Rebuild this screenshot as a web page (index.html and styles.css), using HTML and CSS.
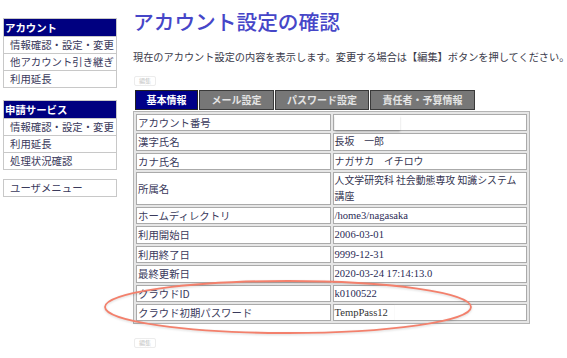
FILE: index.html
```html
<!DOCTYPE html>
<html lang="ja">
<head>
<meta charset="utf-8">
<link rel="stylesheet" href="styles.css">
</head>
<body>
<div class="page">
  <nav class="side">
    <div class="group">
      <div class="ghead">アカウント</div>
      <div class="gitem">情報確認・設定・変更</div>
      <div class="gitem">他アカウント引き継ぎ</div>
      <div class="gitem">利用延長</div>
    </div>
    <div class="group">
      <div class="ghead">申請サービス</div>
      <div class="gitem">情報確認・設定・変更</div>
      <div class="gitem">利用延長</div>
      <div class="gitem">処理状況確認</div>
    </div>
    <div class="group single">
      <div class="gitem first">ユーザメニュー</div>
    </div>
  </nav>
  <main class="main">
    <h1 class="title">アカウント設定の確認</h1>
    <p class="desc">現在のアカウント設定の内容を表示します。変更する場合は【編集】ボタンを押してください。</p>
    <div class="editbtn">編集</div>
    <div class="tabs">
      <div class="tab active t1">基本情報</div>
      <div class="tab t2">メール設定</div>
      <div class="tab t3">パスワード設定</div>
      <div class="tab t4">責任者・予算情報</div>
    </div>
    <table class="info">
      <tr><td class="lbl">アカウント番号</td><td class="val"><span class="mask"></span></td></tr>
      <tr><td class="lbl">漢字氏名</td><td class="val jp">長坂　一郎</td></tr>
      <tr><td class="lbl">カナ氏名</td><td class="val jp">ナガサカ　イチロウ</td></tr>
      <tr><td class="lbl">所属名</td><td class="val jp">人文学研究科 社会動態専攻 知識システム講座</td></tr>
      <tr><td class="lbl">ホームディレクトリ</td><td class="val">/home3/nagasaka</td></tr>
      <tr><td class="lbl">利用開始日</td><td class="val">2006-03-01</td></tr>
      <tr><td class="lbl">利用終了日</td><td class="val">9999-12-31</td></tr>
      <tr><td class="lbl">最終更新日</td><td class="val">2020-03-24 17:14:13.0</td></tr>
      <tr><td class="lbl">クラウドID</td><td class="val">k0100522</td></tr>
      <tr><td class="lbl">クラウド初期パスワード</td><td class="val"><span class="pass">TempPass12</span></td></tr>
    </table>
    <div class="editbtn bottom">編集</div>
  </main>
  <svg class="oval" width="400" height="70" viewBox="0 0 400 70">
    <ellipse cx="186" cy="33" rx="183" ry="26" fill="none" stroke="#f3806c" stroke-width="1.8"/>
  </svg>
</div>
</body>
</html>
```
FILE: styles.css
```css
* { box-sizing: border-box; }
html, body { margin: 0; padding: 0; background: #fff; }
body {
  font-family: "Noto Sans CJK JP", "Noto Sans", sans-serif;
  font-size: 10.4px;
  color: #333;
}
.page {
  position: relative;
  display: flex;
  align-items: flex-start;
  width: 567px;
  height: 358px;
  overflow: hidden;
}
.side {
  width: 114px;
  margin: 18px 0 0 3px;
  flex: none;
  display: flex;
  flex-direction: column;
  gap: 12px;
}
.group {
  border: 1px solid #c8c8c8;
}
.group.single { margin-top: -3px; }
.ghead {
  height: 17px;
  line-height: 17px;
  background: #000080;
  color: #fff;
  font-weight: bold;
  padding-left: 1px;
  white-space: nowrap;
}
.gitem {
  height: 17px;
  line-height: 16px;
  border-top: 1px solid #c8c8c8;
  padding-left: 6px;
  color: #3a3a5c;
  white-space: nowrap;
  overflow: hidden;
}
.gitem.first { border-top: none; height: 16px; }
.main {
  margin-left: 16px;
  flex: none;
  width: 440px;
}
.title {
  margin: 8px 0 0 0;
  font-size: 20.7px;
  line-height: 26px;
  font-weight: 500;
  color: #4646c8;
  white-space: nowrap;
}
.desc {
  margin: 16px 0 0 0;
  font-size: 10.2px;
  line-height: 14px;
  color: #3a3a4a;
  white-space: nowrap;
}
.editbtn {
  margin: 12px 0 0 1px;
  width: 22px;
  height: 10px;
  border: 1px solid #ececec;
  border-radius: 2px;
  font-size: 6px;
  line-height: 8px;
  text-align: center;
  color: #c4c4c4;
}
.editbtn.bottom { margin-top: 14px; }
.tabs {
  display: flex;
  margin: 4px 0 0 2px;
  gap: 1px;
}
.tab {
  height: 20px;
  line-height: 18px;
  padding: 0;
  text-align: center;
  border: 1px solid #3a3a3a;
  background: #777;
  color: #e4e4e4;
  font-weight: bold;
  font-size: 10px;
  white-space: nowrap;
}
.t1 { width: 63px; }
.t2 { width: 75px; }
.t3 { width: 94px; }
.t4 { width: 105px; }
.tab.active {
  background: #000088;
  color: #fff;
  border-color: #222;
}
.info {
  margin-top: 1px;
  width: 397px;
  border-collapse: separate;
  border-spacing: 2px;
  border: 1px solid #b4b4b4;
  background: #e6e6e6;
  table-layout: fixed;
}
.info td {
  border: 1px solid #aaa;
  background: #fff;
  padding: 0 1px;
  line-height: 15.4px;
  vertical-align: middle;
}
.lbl { color: #3a3a5c; white-space: nowrap; }
.val {
  font-family: "Liberation Serif", "Noto Sans CJK JP", serif;
  color: #2a2a55;
  font-size: 10.6px;
}
.val.jp {
  font-family: "Noto Sans CJK JP", sans-serif;
  font-size: 9.9px;
  color: #33334f;
}
.mask {
  display: block;
  width: 65px;
  height: 15px;
  background: #fff;
  box-shadow: 0 2px 2px rgba(0,0,0,0.18);
}
.pass {
  display: inline-block;
  padding-right: 6px;
  color: #333;
  box-shadow: 0 0 1px rgba(0,0,0,0.12);
}
.oval {
  position: absolute;
  left: 102px;
  top: 274px;
  filter: drop-shadow(0 1px 1px rgba(0,0,0,0.15));
}
```
